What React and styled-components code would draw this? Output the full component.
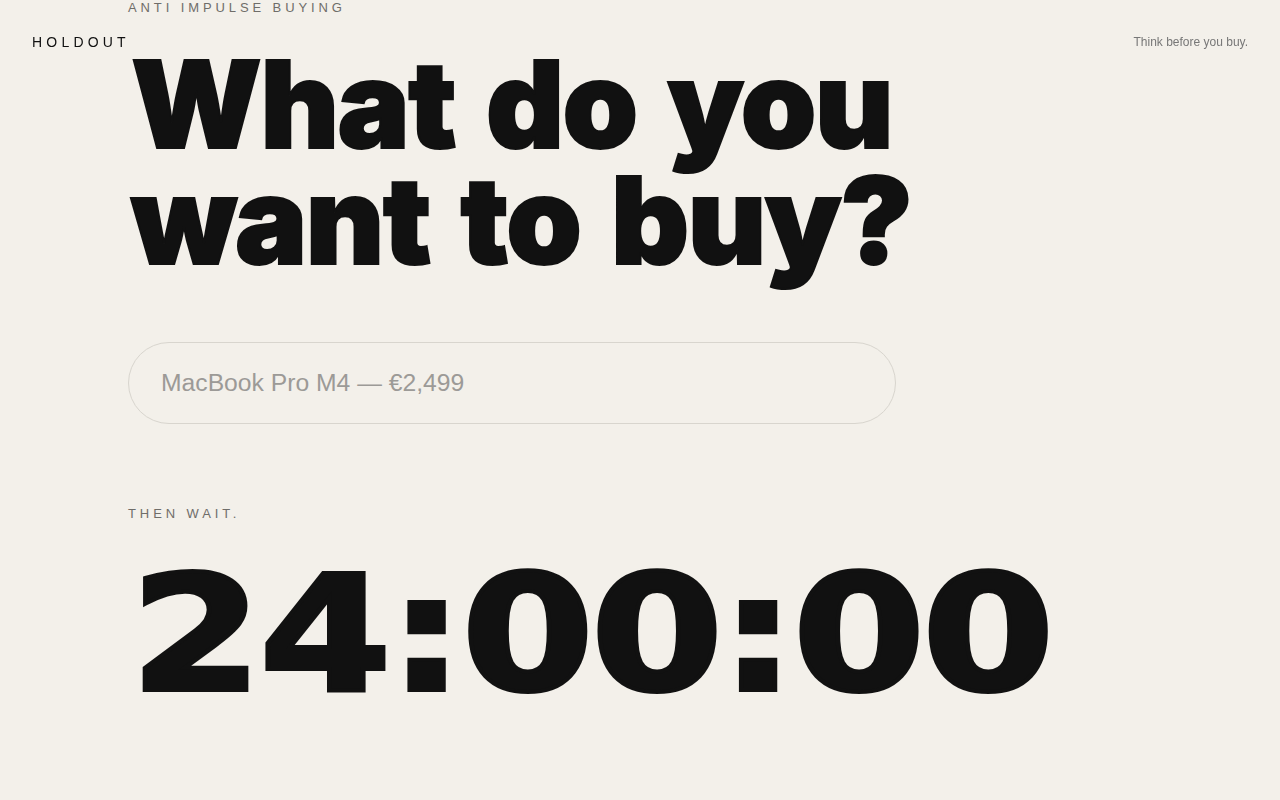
import styled, { createGlobalStyle } from 'styled-components';

const GlobalStyle = createGlobalStyle`
  html, body {
    margin: 0;
    padding: 0;
    background: #f3f0ea;
  }
  body {
    font-family: 'Liberation Sans', Arial, sans-serif;
    color: #111;
  }
  * {
    box-sizing: border-box;
  }
`;

const App = () => {
  return (
    <Page>
      <GlobalStyle />
      <TopBar>
        <Logo>HOLDOUT</Logo>
        <Tagline>Think before you buy.</Tagline>
      </TopBar>

      <Main>
        <Eyebrow>ANTI IMPULSE BUYING</Eyebrow>
        <Headline>
          What do you
          <br />
          want to buy?
        </Headline>

        <ItemInput
          type="text"
          placeholder="MacBook Pro M4 — €2,499"
        />

        <Eyebrow $spaced>THEN WAIT.</Eyebrow>
        <Countdown>24:00:00</Countdown>
      </Main>
    </Page>
  );
};

const Page = styled.div`
  min-height: 100vh;
  background: #f3f0ea;
  position: relative;
  overflow: hidden;
`;

const TopBar = styled.header`
  position: fixed;
  top: 0;
  left: 0;
  right: 0;
  height: 84px;
  padding: 0 32px;
  display: flex;
  align-items: center;
  justify-content: space-between;
  z-index: 10;
`;

const Logo = styled.div`
  font-size: 14px;
  letter-spacing: 0.3em;
  color: #111;
`;

const Tagline = styled.div`
  font-size: 12px;
  color: #777;
`;

const Main = styled.main`
  padding: 0 0 0 128px;
  display: flex;
  flex-direction: column;
  align-items: flex-start;
`;

const Eyebrow = styled.div`
  font-size: 13px;
  letter-spacing: 0.3em;
  color: #6f6d69;
  line-height: 15px;
  margin-top: ${(p) => (p.$spaced ? '82px' : '0')};
`;

const Headline = styled.h1`
  margin: 31px 0 0 3px;
  font-family: Inter, sans-serif;
  font-weight: 900;
  font-size: 121px;
  line-height: 116px;
  letter-spacing: -0.012em;
  word-spacing: 8px;
  color: #111;
  -webkit-text-stroke: 2px #111;
`;

const ItemInput = styled.input`
  margin-top: 64px;
  width: 768px;
  height: 82px;
  padding: 0 32px;
  border: 1px solid #d8d5ce;
  border-radius: 999px;
  background: transparent;
  font-family: 'Liberation Sans', Arial, sans-serif;
  font-size: 24.7px;
  color: #111;
  outline: none;

  &::placeholder {
    color: #9c9a97;
  }
`;

/* wide, heavy clock digits */
const Countdown = styled.div`
  margin: 34px 0 0 2px;
  font-family: 'DejaVu Sans', sans-serif;
  font-weight: 700;
  font-size: 160px;
  line-height: 1;
  letter-spacing: -0.017em;
  color: #111;
  -webkit-text-stroke: 4px #111;
  transform: scaleX(1.19);
  transform-origin: left center;
`;

export default App;
